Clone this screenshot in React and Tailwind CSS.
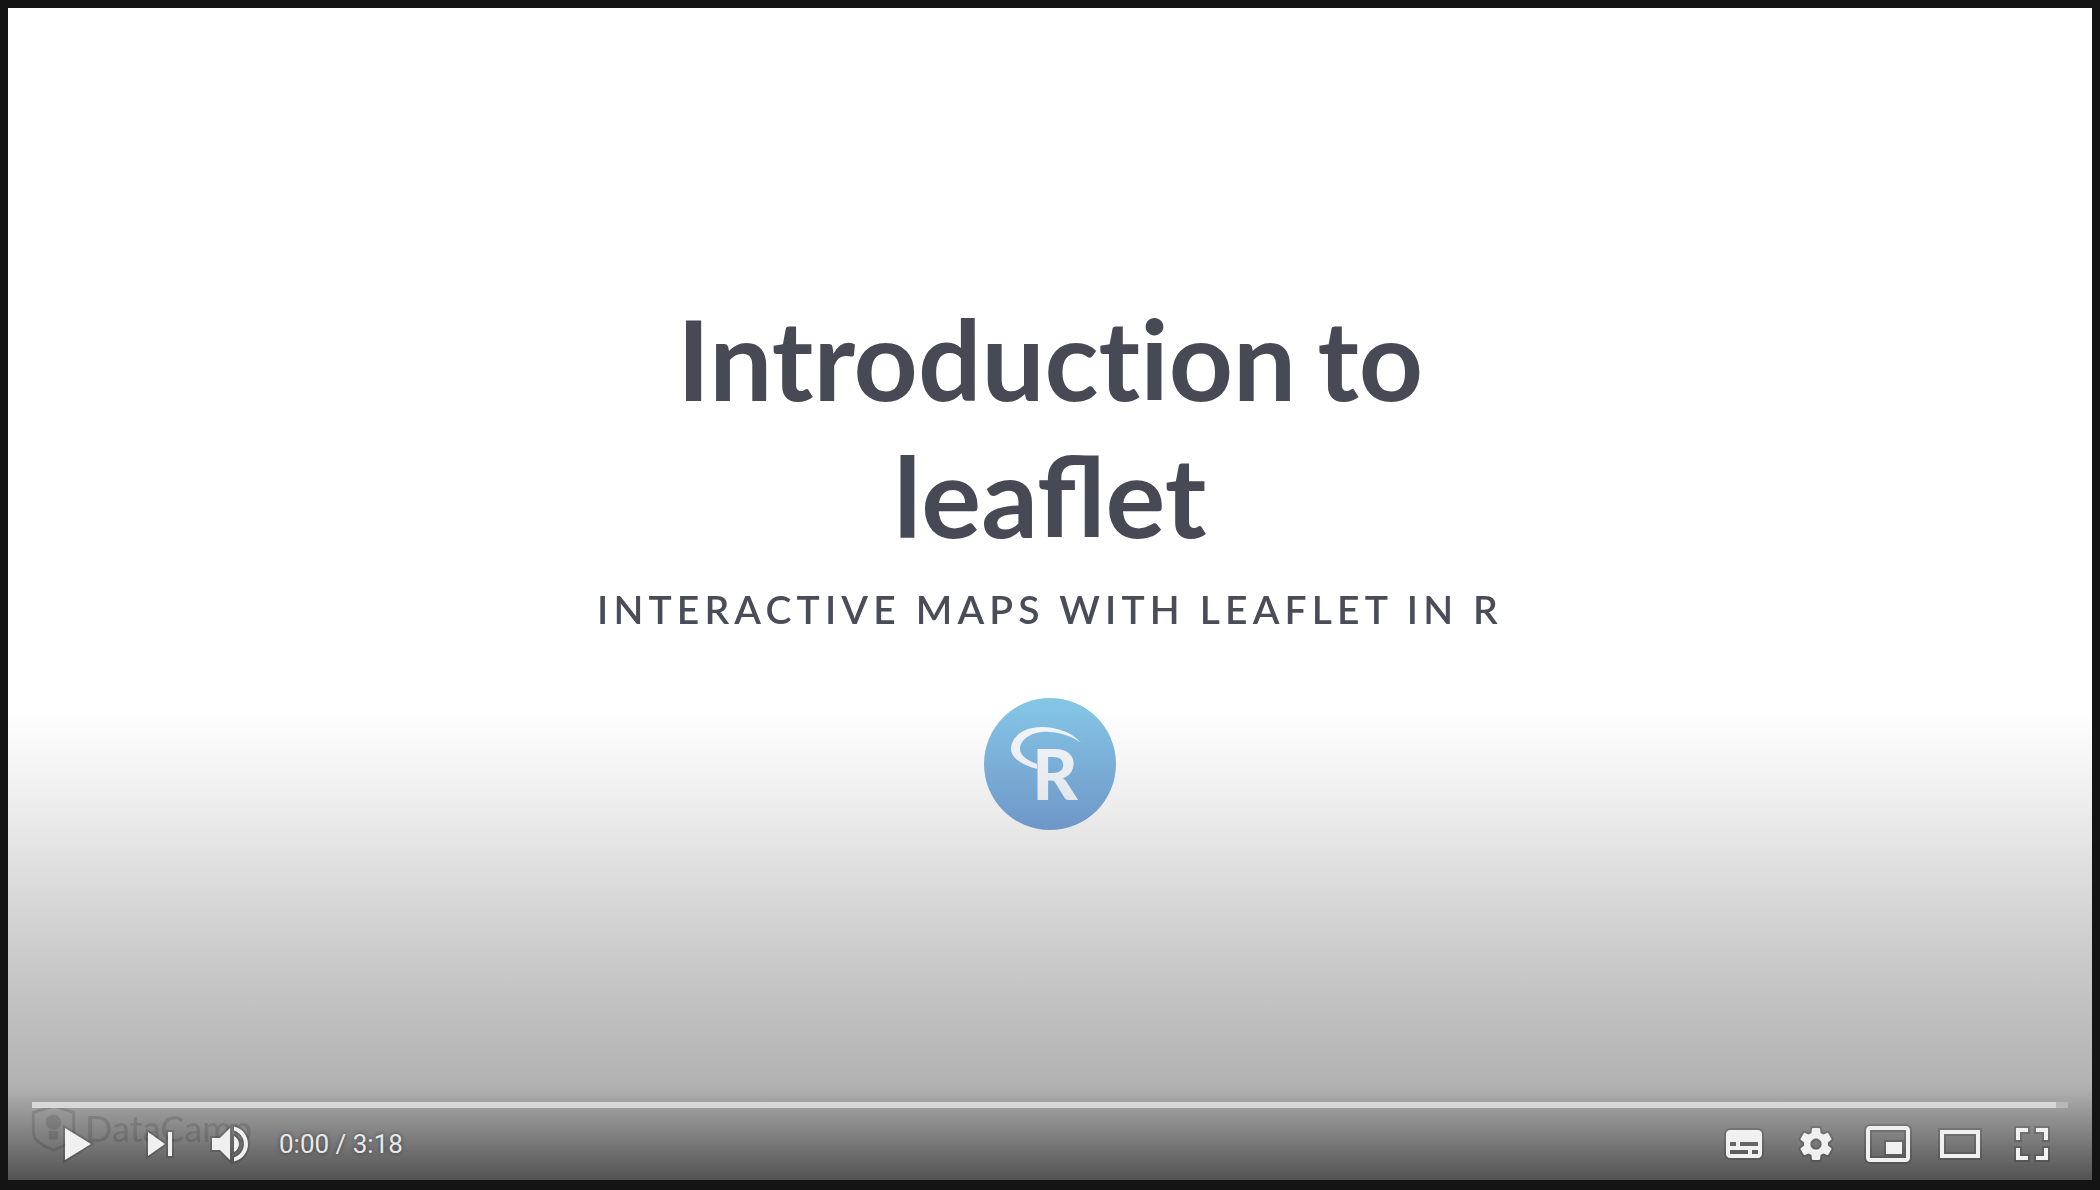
import React from 'react';

const Icon = ({ className, children }) => (
  <svg viewBox="0 0 36 36" className={className}>
    <g fill="#f0f0f0" stroke="#000" strokeOpacity="0.15" strokeWidth="2" className="[paint-order:stroke]">
      {children}
    </g>
  </svg>
);

const RLogo = () => (
  <div className="relative w-[132px] h-[132px] rounded-full bg-gradient-to-b from-[#84c6e4] to-[#7aa6dc] flex items-center justify-center overflow-hidden">
    <svg viewBox="0 0 132 132" className="absolute inset-0 w-full h-full">
      <path
        d="M97 45 C88 34 72 29 58 29 C38 29 27 40 27 51 C27 60 38 67 53 71 L53 66 C42 62 36 57 36 51 C36 42 46 35 58 34 C72 33 86 37 97 45 Z"
        fill="#f4f8fc"
      />
    </svg>
    <span className="relative font-['Lato',sans-serif] font-black text-[70px] leading-none text-[#f4f8fc] ml-[10px] mt-[18px]">R</span>
  </div>
);

export default function App() {
  return (
    <div className="w-[2100px] h-[1190px] bg-[#141414] pt-2 pl-2 pr-2 pb-[10px]">
      <div className="relative w-full h-full bg-white overflow-hidden">
        {/* Slide */}
        <div className="flex flex-col items-center pt-[281px] font-['Lato',sans-serif] blur-[0.6px]">
          <h1 className="text-[112px] leading-[137px] font-bold text-[#474a55] text-center [word-spacing:-6px]">
            Introduct&zwnj;ion to
            <br />
            leaflet
          </h1>
          <p className="mt-[21px] text-[39px] leading-[50px] font-semibold tracking-[0.132em] text-[#4a4d57]">
            INTERACTIVE MAPS WITH LEAFLET IN R
          </p>
          <div className="mt-[64px]">
            <RLogo />
          </div>
        </div>

        {/* Player shade */}
        <div className="absolute inset-x-0 bottom-0 h-[470px] bg-[linear-gradient(to_bottom,rgba(0,0,0,0)_0%,rgba(0,0,0,0.07)_20%,rgba(0,0,0,0.21)_54%,rgba(0,0,0,0.3)_80%,rgba(0,0,0,0.45)_88%,rgba(0,0,0,0.68)_100%)]" />

        {/* Watermark */}
        <div className="absolute left-[23px] bottom-[25px] flex items-center gap-[9px] opacity-[0.12]">
          <svg viewBox="0 0 46 50" className="w-[45px] h-[48px]">
            <path d="M23 2 L44 9 V30 C44 38 33 45 23 48 C13 45 2 38 2 30 V9 Z" fill="none" stroke="#000" strokeWidth="3" />
            <circle cx="23" cy="19" r="8" fill="#000" />
            <rect x="18" y="28" width="10" height="9" fill="#000" />
          </svg>
          <span className="font-['Lato',sans-serif] font-medium text-[36px] text-black">DataCamp</span>
        </div>

        {/* Controls */}
        <div className="absolute inset-x-0 bottom-0 px-6">
          <div className="flex h-[6px]">
            <div className="flex-1 bg-[#d8d8d8]" />
            <div className="w-3 bg-[#b8b8b8]" />
          </div>
          <div className="flex h-[72px] items-center justify-between">
            <div className="flex items-center pl-[9px]">
              <Icon className="w-[72px] h-[72px] mr-[11px]">
                <path d="M12 26 L18.5 22 L18.5 14 L12 10 Z M18.5 22 L25 18 L18.5 14 Z" />
              </Icon>
              <Icon className="w-[72px] h-[72px]">
                <path d="M12 24 L20.5 18 L12 12 V24 Z M22 12 V24 H24 V12 H22 Z" />
              </Icon>
              <Icon className="w-[72px] h-[72px]">
                <path d="M8 21 L12 21 L17 26 L17 10 L12 15 L8 15 L8 21 Z M19 14 L19 22 C20.48 21.32 21.5 19.77 21.5 18 C21.5 16.26 20.48 14.74 19 14 Z M19 11.29 C21.89 12.15 24 14.83 24 18 C24 21.17 21.89 23.85 19 24.71 L19 26.77 C23.01 25.86 26 22.28 26 18 C26 13.72 23.01 10.14 19 9.23 L19 11.29 Z" />
              </Icon>
              <span className="ml-[11px] font-['Roboto',sans-serif] text-[26px] text-[#e8e8e8] [text-shadow:0_0_4px_rgba(0,0,0,0.5)]">
                0:00 / 3:18
              </span>
            </div>
            <div className="flex items-center">
              <Icon className="w-[72px] h-[72px]">
                <path fillRule="evenodd" d="M11 11 C9.9 11 9 11.9 9 13 L9 23 C9 24.1 9.9 25 11 25 L25 25 C26.1 25 27 24.1 27 23 L27 13 C27 11.9 26.1 11 25 11 L11 11 Z M11 17 L14 17 L14 19 L11 19 L11 17 Z M20 23 L11 23 L11 21 L20 21 L20 23 Z M25 23 L22 23 L22 21 L25 21 L25 23 Z M25 19 L16 19 L16 17 L25 17 L25 19 Z" />
              </Icon>
              <Icon className="w-[72px] h-[72px]">
                <path d="m 23.94,18.78 c .03,-0.25 .05,-0.51 .05,-0.78 0,-0.27 -0.02,-0.52 -0.05,-0.78 l 1.68,-1.32 c .15,-0.12 .19,-0.33 .09,-0.51 l -1.6,-2.76 c -0.09,-0.17 -0.31,-0.24 -0.48,-0.17 l -1.99,.8 c -0.41,-0.32 -0.86,-0.58 -1.35,-0.78 l -0.30,-2.12 c -0.02,-0.19 -0.19,-0.33 -0.39,-0.33 l -3.2,0 c -0.2,0 -0.36,.14 -0.39,.33 l -0.30,2.12 c -0.48,.2 -0.93,.47 -1.35,.78 l -1.99,-0.8 c -0.18,-0.07 -0.39,0 -0.48,.17 l -1.6,2.76 c -0.10,.17 -0.05,.39 .09,.51 l 1.68,1.32 c -0.03,.25 -0.05,.52 -0.05,.78 0,.26 .02,.52 .05,.78 l -1.68,1.32 c -0.15,.12 -0.19,.33 -0.09,.51 l 1.6,2.76 c .09,.17 .31,.24 .48,.17 l 1.99,-0.8 c .41,.32 .86,.58 1.35,.78 l .30,2.12 c .02,.19 .19,.33 .39,.33 l 3.2,0 c .2,0 .36,-0.14 .39,-0.33 l .30,-2.12 c .48,-0.2 .93,-0.47 1.35,-0.78 l 1.99,.8 c .18,.07 .39,0 .48,-0.17 l 1.6,-2.76 c .09,-0.17 .05,-0.39 -0.09,-0.51 l -1.65,-1.32 0,0 z m -5.94,2.01 c -1.54,0 -2.8,-1.25 -2.8,-2.8 0,-1.54 1.25,-2.8 2.8,-2.8 1.54,0 2.8,1.25 2.8,2.8 0,1.54 -1.25,2.8 -2.8,2.8 l 0,0 z" />
              </Icon>
              <Icon className="w-[72px] h-[72px]">
                <path fillRule="evenodd" d="M25 17 L17 17 L17 23 L25 23 L25 17 Z M29 25 L29 10.98 C29 9.88 28.1 9 27 9 L9 9 C7.9 9 7 9.88 7 10.98 L7 25 C7 26.1 7.9 27 9 27 L27 27 C28.1 27 29 26.1 29 25 Z M27 25.02 L9 25.02 L9 10.97 L27 10.97 L27 25.02 Z" />
              </Icon>
              <Icon className="w-[72px] h-[72px]">
                <path fillRule="evenodd" d="m 28,11 0,14 -20,0 0,-14 z m -18,2 16,0 0,10 -16,0 0,-10 z" />
              </Icon>
              <Icon className="w-[72px] h-[72px]">
                <path d="m 10,16 2,0 0,-4 4,0 0,-2 L 10,10 z M 20,10 l 0,2 4,0 0,4 2,0 L 26,10 z M 24,24 l -4,0 0,2 L 26,26 l 0,-6 -2,0 z M 12,20 L 10,20 10,26 l 6,0 0,-2 -4,0 z" />
              </Icon>
            </div>
          </div>
        </div>
      </div>
    </div>
  );
}
